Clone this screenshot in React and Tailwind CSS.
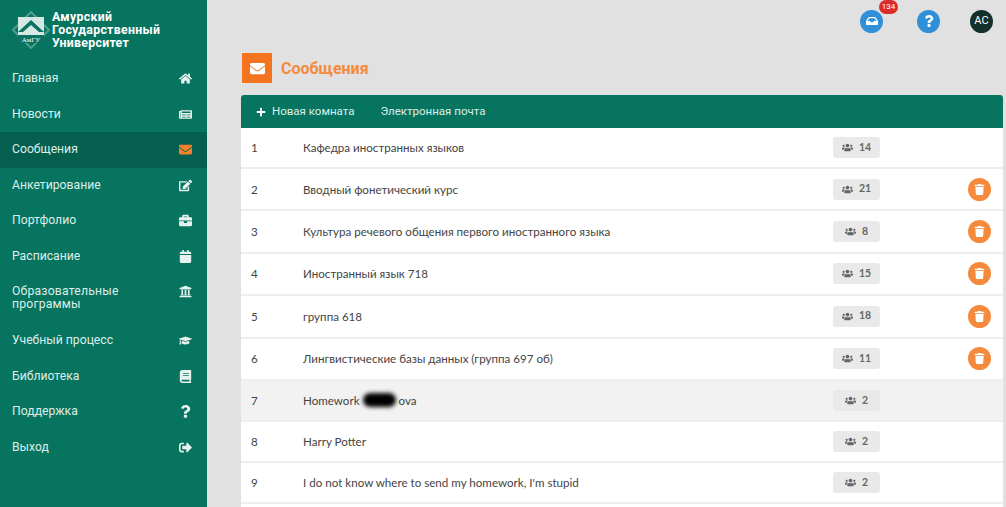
import { FaHome, FaNewspaper, FaEnvelope, FaEdit, FaBriefcase, FaCalendar, FaUniversity, FaGraduationCap, FaBook, FaQuestion, FaSignOutAlt, FaUsers, FaTrash, FaPlus, FaInbox } from "react-icons/fa";

const menu = [
  { label: "Главная", icon: FaHome },
  { label: "Новости", icon: FaNewspaper },
  { label: "Сообщения", icon: FaEnvelope, active: true },
  { label: "Анкетирование", icon: FaEdit },
  { label: "Портфолио", icon: FaBriefcase },
  { label: "Расписание", icon: FaCalendar },
  { label: "Образовательные программы", icon: FaUniversity, tall: true },
  { label: "Учебный процесс", icon: FaGraduationCap },
  { label: "Библиотека", icon: FaBook },
  { label: "Поддержка", icon: FaQuestion },
  { label: "Выход", icon: FaSignOutAlt },
];

const rooms = [
  { name: "Кафедра иностранных языков", count: 14 },
  { name: "Вводный фонетический курс", count: 21, del: true },
  { name: "Культура речевого общения первого иностранного языка", count: 8, del: true },
  { name: "Иностранный язык 718", count: 15, del: true },
  { name: "группа 618", count: 18, del: true },
  { name: "Лингвистические базы данных (группа 697 об)", count: 11, del: true },
  { name: "Homework", hidden: "ova", count: 2, hover: true },
  { name: "Harry Potter", count: 2 },
  { name: "I do not know where to send my homework, I'm stupid", count: 2 },
];

function Logo() {
  return (
    <svg width="38" height="38" viewBox="0 0 38 38" className="shrink-0">
      <path d="M19 1 L37 19 L19 37 L1 19 Z" fill="none" stroke="#4d9f8e" strokeWidth="2" />
      <rect x="6" y="6" width="26" height="26" fill="#d5e8e3" />
      <path d="M6 21 L19 9 L32 21 L27 21 L19 14 L11 21 Z" fill="#0c7262" />
      <rect x="6" y="24" width="26" height="8" fill="#0c7262" />
      <text x="19" y="31" textAnchor="middle" fontSize="7" fill="#fff" fontFamily="Liberation Serif, serif">АмГУ</text>
    </svg>
  );
}

export default function App() {
  return (
    <div className="flex w-[1006px] h-[507px] overflow-hidden bg-[#e1e1e1] font-['Roboto','Liberation_Sans',sans-serif]">
      <aside className="w-[207px] shrink-0 bg-[#07745f] text-[#dceee9]">
        <div className="flex items-center h-[60px] pl-[12px] gap-[2px]">
          <Logo />
          <div className="text-[12.3px] leading-[13px] font-bold text-white tracking-[0.3px] mt-[1px]">
            Амурский<br />Государственный<br />Университет
          </div>
        </div>
        <nav className="pt-[1px]">
          {menu.map((item) => {
            const Icon = item.icon;
            return (
              <div
                key={item.label}
                className={`flex justify-between pl-[12px] pr-[15px] text-[12.2px] leading-[13px] ${item.tall ? "h-[49px] pt-[11px]" : "h-[35.5px] items-center"} ${item.active ? "bg-[#055f4f]" : ""}`}
              >
                <span className={item.tall ? "w-[130px] tracking-[0.2px]" : ""}>{item.label}</span>
                <Icon className={`text-[13px] ${item.active ? "text-[#f5812d]" : "text-[#e6f2ef]"}`} />
              </div>
            );
          })}
        </nav>
      </aside>

      <main className="flex-1 min-w-0 pl-[34px] pr-[3px]">
        <div className="flex justify-end items-center h-[42px] pr-[10px]">
          <div className="relative w-[23px] h-[23px] rounded-full bg-[#2f8fd8] flex items-center justify-center mr-[34px]">
            <FaInbox className="text-white text-[12px]" />
            <span className="absolute -top-[10px] left-[19px] h-[14px] min-w-[19px] px-[2px] rounded-full bg-[#dc2b2b] text-white text-[8px] leading-[14px] text-center">134</span>
          </div>
          <div className="w-[23px] h-[23px] rounded-full bg-[#2f8fd8] flex items-center justify-center text-white mr-[30px]">
            <FaQuestion className="text-[12px]" />
          </div>
          <div className="w-[23px] h-[23px] rounded-full bg-[#14302b] flex items-center justify-center text-white text-[11px]">АС</div>
        </div>

        <div className="flex items-center h-[30px] mt-[11px] ml-[1px] gap-[9px]">
          <div className="w-[30px] h-[30px] bg-[#f5741f] flex items-center justify-center">
            <FaEnvelope className="text-white text-[15px]" />
          </div>
          <h1 className="text-[16px] font-bold text-[#f58a3c] mt-[1px]">Сообщения</h1>
        </div>

        <div className="mt-[12px] pb-[20px] bg-white rounded-t-[3px] overflow-hidden">
          <div className="flex items-center h-[33px] bg-[#07745f] text-[#dceee9] text-[11.5px] pl-[15px]">
            <FaPlus className="text-white text-[10px] mr-[6px]" />
            <span>Новая комната</span>
            <span className="ml-[26px]">Электронная почта</span>
          </div>
          {rooms.map((room, i) => (
            <div
              key={i}
              className={`flex items-center pl-[10px] pr-[12px] border-b-2 border-[#eeeeee] text-[11.6px] text-[#444444] font-['Lato','Roboto',sans-serif] ${room.del ? "h-[42.4px]" : "h-[41px]"} ${room.hover ? "bg-[#f2f2f2]" : ""}`}
            >
              <span className="w-[52px]">{i + 1}</span>
              <span className="flex-1 flex items-center whitespace-pre">
                {room.name}
                {room.hidden && <span className="inline-block w-[33px] h-[14px] mx-[3px] rounded-full bg-black blur-[2px]" />}
                {room.hidden}
              </span>
              <span className="flex items-center justify-center gap-[6px] w-[47px] h-[21px] rounded-[3px] bg-[#e9e9e9] text-[#666666] text-[10.5px] font-bold mr-[88px]">
                <FaUsers className="text-[11px]" />
                {room.count}
              </span>
              <span className="w-[23px] flex justify-center">
                {room.del && (
                  <span className="w-[23px] h-[23px] rounded-full bg-[#f58a3c] flex items-center justify-center">
                    <FaTrash className="text-white text-[11px]" />
                  </span>
                )}
              </span>
            </div>
          ))}
        </div>
      </main>
    </div>
  );
}
